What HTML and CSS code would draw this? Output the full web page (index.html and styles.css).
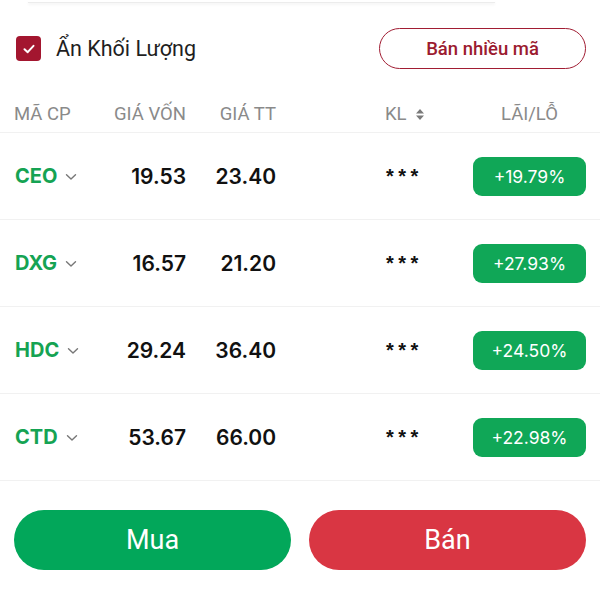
FILE: index.html
```html
<!DOCTYPE html>
<html lang="vi">
<head>
<meta charset="utf-8">
<link rel="stylesheet" href="styles.css">
</head>
<body>
<div class="page">
  <div class="prev-edge"></div>
  <div class="toolbar">
    <label class="check">
      <span class="box">
        <svg width="16" height="16" viewBox="0 0 16 16"><path d="M3.5 8.2 L6.7 11.2 L12.5 4.8" fill="none" stroke="#fff" stroke-width="2" stroke-linecap="round" stroke-linejoin="round"/></svg>
      </span>
      <span class="check-label">Ẩn Khối Lượng</span>
    </label>
    <button class="outline-btn">Bán nhiều mã</button>
  </div>

  <div class="grid head">
    <div class="c1">MÃ CP</div>
    <div class="c2">GIÁ VỐN</div>
    <div class="c3">GIÁ TT</div>
    <div class="c4">KL <svg class="sort" width="10" height="13" viewBox="0 0 10 13"><path d="M5 1 L9 5.5 H1 Z M5 12 L9 7.5 H1 Z" fill="#7a7a7a"/></svg></div>
    <div class="c5">LÃI/LỖ</div>
  </div>

  <div class="grid row">
    <div class="c1 sym">CEO <svg class="chev" width="12" height="8" viewBox="0 0 12 8"><path d="M1.5 1.8 L6 6 L10.5 1.8" fill="none" stroke="#777" stroke-width="1.4" stroke-linecap="round" stroke-linejoin="round"/></svg></div>
    <div class="c2 num">19.53</div>
    <div class="c3 num">23.40</div>
    <div class="c4 stars">***</div>
    <div class="c5"><span class="pill">+19.79%</span></div>
  </div>
  <div class="grid row">
    <div class="c1 sym">DXG <svg class="chev" width="12" height="8" viewBox="0 0 12 8"><path d="M1.5 1.8 L6 6 L10.5 1.8" fill="none" stroke="#777" stroke-width="1.4" stroke-linecap="round" stroke-linejoin="round"/></svg></div>
    <div class="c2 num">16.57</div>
    <div class="c3 num">21.20</div>
    <div class="c4 stars">***</div>
    <div class="c5"><span class="pill">+27.93%</span></div>
  </div>
  <div class="grid row">
    <div class="c1 sym">HDC <svg class="chev" width="12" height="8" viewBox="0 0 12 8"><path d="M1.5 1.8 L6 6 L10.5 1.8" fill="none" stroke="#777" stroke-width="1.4" stroke-linecap="round" stroke-linejoin="round"/></svg></div>
    <div class="c2 num">29.24</div>
    <div class="c3 num">36.40</div>
    <div class="c4 stars">***</div>
    <div class="c5"><span class="pill">+24.50%</span></div>
  </div>
  <div class="grid row">
    <div class="c1 sym">CTD <svg class="chev" width="12" height="8" viewBox="0 0 12 8"><path d="M1.5 1.8 L6 6 L10.5 1.8" fill="none" stroke="#777" stroke-width="1.4" stroke-linecap="round" stroke-linejoin="round"/></svg></div>
    <div class="c2 num">53.67</div>
    <div class="c3 num">66.00</div>
    <div class="c4 stars">***</div>
    <div class="c5"><span class="pill">+22.98%</span></div>
  </div>

  <div class="actions">
    <button class="big buy">Mua</button>
    <button class="big sell">Bán</button>
  </div>
</div>
</body>
</html>
```
FILE: styles.css
```css
* { box-sizing: border-box; }
html, body { margin: 0; padding: 0; background: #fff; }
body { font-family: Roboto, "Noto Sans", sans-serif; color: #222; }
.page { width: 600px; height: 600px; overflow: hidden; }

.prev-edge {
  margin: 0 105px 0 28px;
  height: 3px;
  border-bottom: 1px solid #ececec;
  box-shadow: 0 2px 3px rgba(0,0,0,0.04);
}

.toolbar {
  display: flex;
  align-items: center;
  justify-content: space-between;
  padding: 0 14px 0 16px;
  margin-top: 25px;
  height: 41px;
}
.check { display: flex; align-items: center; gap: 15px; }
.box {
  width: 25px; height: 25px;
  border-radius: 4px;
  background: #a3162f;
  display: flex; align-items: center; justify-content: center;
}
.check-label { font-size: 21.5px; color: #1f1f1f; }
.outline-btn {
  width: 207px; height: 41px;
  border: 1.5px solid #a11d33;
  border-radius: 21px;
  background: #fff;
  color: #9b1b30;
  font-family: Roboto, sans-serif;
  font-size: 18.5px;
  font-weight: 500;
  padding: 0;
}

.grid {
  display: grid;
  grid-template-columns: 86px 86px 90px 197px 113px;
  align-items: center;
  padding: 0 14px;
  border-bottom: 1px solid #f1f1f1;
}
.head {
  margin-top: 24px;
  height: 40px;
  padding-top: 2px;
  font-size: 18.5px;
  color: #8a8a8a;
}
.row { height: 87px; }
.c2, .c3 { text-align: right; }
.c4 { padding-left: 109px; display: flex; align-items: center; gap: 8px; }
.c5 { text-align: center; }
.sort { margin-top: 1px; }

.sym {
  padding-left: 1px;
  font-family: Inter, "Liberation Sans", sans-serif;
  font-weight: 700;
  font-size: 20px;
  color: #15a353;
  display: flex; align-items: center; gap: 8px;
}
.chev { margin-top: 2px; }
.num {
  font-family: Inter, "Liberation Sans", sans-serif;
  font-weight: 600;
  font-size: 21px;
  color: #111;
}
.stars {
  font-family: "Liberation Sans", sans-serif;
  font-weight: 700;
  font-size: 20px;
  letter-spacing: 4.5px;
  color: #111;
  padding-left: 110px;
}
.pill {
  display: flex;
  align-items: center;
  justify-content: center;
  height: 39px;
  width: 113px;
  border-radius: 9px;
  background: #10a757;
  color: #fff;
  font-family: Inter, sans-serif;
  font-size: 17.5px;
}

.actions {
  display: flex;
  gap: 18px;
  padding: 29px 14px 0;
}
.big {
  flex: 1;
  height: 60px;
  border: none;
  border-radius: 30px;
  color: #fff;
  font-family: Roboto, sans-serif;
  font-size: 27px;
  padding: 0;
}
.buy { background: #02a75a; }
.sell { background: #d93643; }
```
